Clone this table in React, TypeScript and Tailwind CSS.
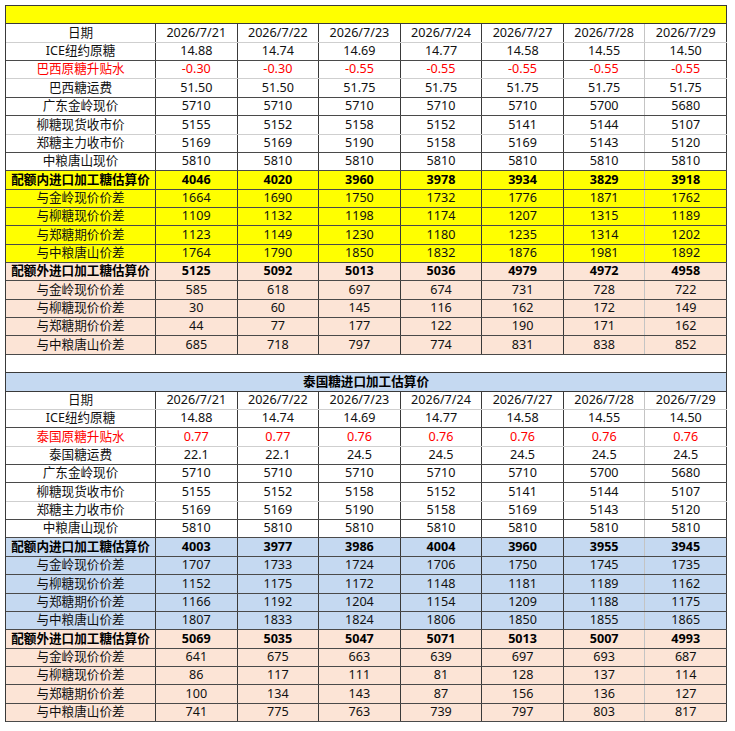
import React from "react";

const DATES = [
  "2026/7/21",
  "2026/7/22",
  "2026/7/23",
  "2026/7/24",
  "2026/7/27",
  "2026/7/28",
  "2026/7/29",
];

type RowKind = "plain" | "red" | "bold";

interface RowDef {
  label: string;
  values: string[];
  kind?: RowKind;
  bg?: string;
  light?: boolean;
}

const YELLOW = "bg-[#ffff00]";
const PEACH = "bg-[#fce4d6]";
const BLUE = "bg-[#c5d9f1]";

const common = (x: string[]): RowDef[] => [
  { label: "广东金岭现价", values: ["5710", "5710", "5710", "5710", "5710", "5700", "5680"] },
  { label: "柳糖现货收市价", values: ["5155", "5152", "5158", "5152", "5141", "5144", "5107"], light: true },
  { label: "郑糖主力收市价", values: ["5169", "5169", "5190", "5158", "5169", "5143", "5120"] },
  { label: "中粮唐山现价", values: x },
];

const brazil: RowDef[] = [
  { label: "日期", values: DATES, light: true },
  { label: "ICE纽约原糖", values: ["14.88", "14.74", "14.69", "14.77", "14.58", "14.55", "14.50"] },
  { label: "巴西原糖升贴水", values: ["-0.30", "-0.30", "-0.55", "-0.55", "-0.55", "-0.55", "-0.55"], kind: "red", light: true },
  { label: "巴西糖运费", values: ["51.50", "51.50", "51.75", "51.75", "51.75", "51.75", "51.75"] },
  ...common(["5810", "5810", "5810", "5810", "5810", "5810", "5810"]),
  { label: "配额内进口加工糖估算价", values: ["4046", "4020", "3960", "3978", "3934", "3829", "3918"], kind: "bold", bg: YELLOW },
  { label: "与金岭现价价差", values: ["1664", "1690", "1750", "1732", "1776", "1871", "1762"], bg: YELLOW },
  { label: "与柳糖现价价差", values: ["1109", "1132", "1198", "1174", "1207", "1315", "1189"], bg: YELLOW },
  { label: "与郑糖期价价差", values: ["1123", "1149", "1230", "1180", "1235", "1314", "1202"], bg: YELLOW },
  { label: "与中粮唐山价差", values: ["1764", "1790", "1850", "1832", "1876", "1981", "1892"], bg: YELLOW },
  { label: "配额外进口加工糖估算价", values: ["5125", "5092", "5013", "5036", "4979", "4972", "4958"], kind: "bold", bg: PEACH },
  { label: "与金岭现价价差", values: ["585", "618", "697", "674", "731", "728", "722"], bg: PEACH },
  { label: "与柳糖现价价差", values: ["30", "60", "145", "116", "162", "172", "149"], bg: PEACH },
  { label: "与郑糖期价价差", values: ["44", "77", "177", "122", "190", "171", "162"], bg: PEACH },
  { label: "与中粮唐山价差", values: ["685", "718", "797", "774", "831", "838", "852"], bg: PEACH },
];

const thai: RowDef[] = [
  { label: "日期", values: DATES, light: true },
  { label: "ICE纽约原糖", values: ["14.88", "14.74", "14.69", "14.77", "14.58", "14.55", "14.50"] },
  { label: "泰国原糖升贴水", values: ["0.77", "0.77", "0.76", "0.76", "0.76", "0.76", "0.76"], kind: "red", light: true },
  { label: "泰国糖运费", values: ["22.1", "22.1", "24.5", "24.5", "24.5", "24.5", "24.5"] },
  ...common(["5810", "5810", "5810", "5810", "5810", "5810", "5810"]),
  { label: "配额内进口加工糖估算价", values: ["4003", "3977", "3986", "4004", "3960", "3955", "3945"], kind: "bold", bg: BLUE },
  { label: "与金岭现价价差", values: ["1707", "1733", "1724", "1706", "1750", "1745", "1735"], bg: BLUE },
  { label: "与柳糖现价价差", values: ["1152", "1175", "1172", "1148", "1181", "1189", "1162"], bg: BLUE },
  { label: "与郑糖期价价差", values: ["1166", "1192", "1204", "1154", "1209", "1188", "1175"], bg: BLUE },
  { label: "与中粮唐山价差", values: ["1807", "1833", "1824", "1806", "1850", "1855", "1865"], bg: BLUE },
  { label: "配额外进口加工糖估算价", values: ["5069", "5035", "5047", "5071", "5013", "5007", "4993"], kind: "bold", bg: PEACH },
  { label: "与金岭现价价差", values: ["641", "675", "663", "639", "697", "693", "687"], bg: PEACH },
  { label: "与柳糖现价价差", values: ["86", "117", "111", "81", "128", "137", "114"], bg: PEACH },
  { label: "与郑糖期价价差", values: ["100", "134", "143", "87", "156", "136", "127"], bg: PEACH },
  { label: "与中粮唐山价差", values: ["741", "775", "763", "739", "797", "803", "817"], bg: PEACH },
];

const DataRow: React.FC<{ row: RowDef }> = ({ row }) => {
  const text =
    row.kind === "red"
      ? "text-[#ff0000]"
      : row.kind === "bold"
        ? "font-bold text-black"
        : "text-[#111]";
  return (
    <div
      className={`grid h-[18.36px] grid-cols-[150px_repeat(7,minmax(0,1fr))] border-b ${
        row.light ? "border-b-[#cfcfcf]" : "border-b-[#4a4a4a]"
      } ${row.bg ?? "bg-white"}`}
    >
      <div className={`flex items-center justify-center border-r border-[#3a3a3a] ${text}`}>
        {row.label}
      </div>
      {row.values.map((v, i) => (
        <div
          key={i}
          className={`flex items-center justify-center border-r ${
            i === 5 ? "border-[#c4c4c4]" : "border-[#3a3a3a]"
          } ${text}`}
        >
          {v}
        </div>
      ))}
    </div>
  );
};

const BandRow: React.FC<{ bg: string; title?: string }> = ({ bg, title }) => (
  <div
    className={`flex h-[18.36px] items-center justify-center border-r border-b border-[#3a3a3a] font-bold text-black ${bg}`}
  >
    {title}
  </div>
);

export default function App() {
  return (
    <div className="min-h-[731px] bg-white p-[5px]">
      <div
        className="w-[722px] border-t border-l border-[#3a3a3a] text-[12.6px] leading-none"
        style={{ fontFamily: '"Noto Sans", "Noto Sans CJK SC", sans-serif' }}
      >
        <BandRow bg={YELLOW} />
        {brazil.map((r, i) => (
          <DataRow key={`b${i}`} row={r} />
        ))}
        <BandRow bg="bg-white" />
        <BandRow bg={BLUE} title="泰国糖进口加工估算价" />
        {thai.map((r, i) => (
          <DataRow key={`t${i}`} row={r} />
        ))}
      </div>
    </div>
  );
}
